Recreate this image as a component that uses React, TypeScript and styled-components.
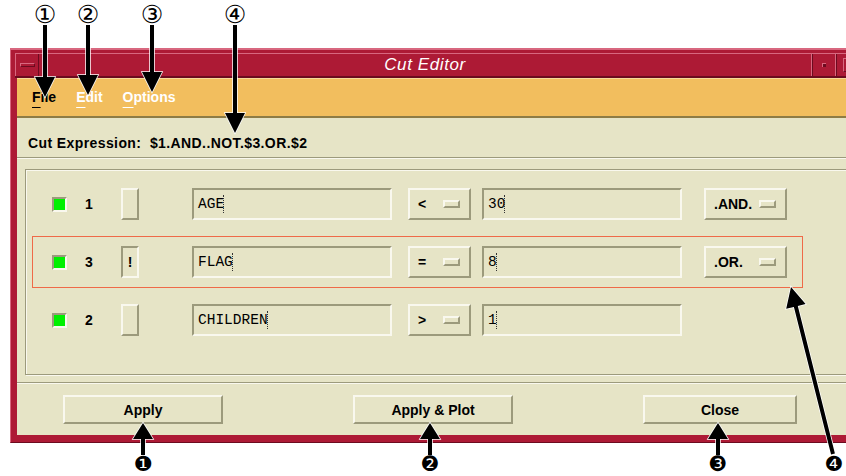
import React from 'react';
import styled, { createGlobalStyle } from 'styled-components';

const red = '#ad1a35';
const redLight = '#d8677f';
const redDark = '#6c0b1f';
const orange = '#f2be5e';
const orangeLight = '#f9d998';
const orangeDark = '#8e7c45';
const beige = '#e6e4c6';
const bevelLight = '#f9f8ee';
const bevelDark = '#9c9a7c';
const green = '#00f000';
const highlight = '#ef6a48';

const GlobalStyle = createGlobalStyle`
  html, body {
    margin: 0;
    padding: 0;
    background: #ffffff;
    overflow: hidden;
  }
  body {
    font-family: 'Liberation Sans', Arial, sans-serif;
  }
`;

type Cut = {
  id: number;
  negated: boolean;
  variable: string;
  op: string;
  value: string;
  join?: string;
  selected?: boolean;
};

const cuts: Cut[] = [
  { id: 1, negated: false, variable: 'AGE', op: '<', value: '30', join: '.AND.' },
  { id: 3, negated: true, variable: 'FLAG', op: '=', value: '8', join: '.OR.', selected: true },
  { id: 2, negated: false, variable: 'CHILDREN', op: '>', value: '1' },
];

const menus = [
  { label: 'File', light: false },
  { label: 'Edit', light: true },
  { label: 'Options', light: true },
];

const buttons = [
  { label: 'Apply', width: 160 },
  { label: 'Apply & Plot', width: 160 },
  { label: 'Close', width: 154 },
];

// arrow as one polygon: shaft + head, tip at (x2, y2)
const arrowPoints = (
  x1: number,
  y1: number,
  x2: number,
  y2: number,
  headLen: number,
  headHalf: number,
  shaftHalf = 2
) => {
  const dx = x2 - x1;
  const dy = y2 - y1;
  const len = Math.sqrt(dx * dx + dy * dy);
  const ux = dx / len;
  const uy = dy / len;
  const px = -uy;
  const py = ux;
  const bx = x2 - ux * headLen;
  const by = y2 - uy * headLen;
  const pts = [
    [x1 + px * shaftHalf, y1 + py * shaftHalf],
    [bx + px * shaftHalf, by + py * shaftHalf],
    [bx + px * headHalf, by + py * headHalf],
    [x2, y2],
    [bx - px * headHalf, by - py * headHalf],
    [bx - px * shaftHalf, by - py * shaftHalf],
    [x1 - px * shaftHalf, y1 - py * shaftHalf],
  ];
  return pts.map((p) => `${p[0].toFixed(1)},${p[1].toFixed(1)}`).join(' ');
};

const topMarks = [
  { label: '①', x: 45, tip: 97 },
  { label: '②', x: 88, tip: 95 },
  { label: '③', x: 152, tip: 92 },
  { label: '④', x: 235, tip: 133 },
];

const bottomMarks = [
  { label: '❶', x: 143 },
  { label: '❷', x: 430 },
  { label: '❸', x: 718 },
];

const Annotations = () => (
  <Overlay width='846' height='476' viewBox='0 0 846 476'>
    {topMarks.map((m) => (
      <g key={m.label}>
        <MarkText x={m.x} y={14}>
          {m.label}
        </MarkText>
        <polygon
          points={arrowPoints(m.x, 25, m.x, m.tip, 20, 10)}
          fill='#000'
          stroke='#fff'
          strokeWidth={1.5}
          paintOrder='stroke'
        />
      </g>
    ))}
    {bottomMarks.map((m) => (
      <g key={m.label}>
        <polygon
          points={arrowPoints(m.x, 455, m.x, 423, 16, 10)}
          fill='#000'
          stroke='#fff'
          strokeWidth={1.5}
          paintOrder='stroke'
        />
        <MarkText x={m.x} y={464} $filled>
          {m.label}
        </MarkText>
      </g>
    ))}
    <polygon
      points={arrowPoints(833, 454, 791, 287, 20, 10)}
      fill='#000'
      stroke='#fff'
      strokeWidth={1.5}
      paintOrder='stroke'
    />
    <MarkText x={834} y={464} $filled>
      ❹
    </MarkText>
  </Overlay>
);

const CutRowView = ({ cut }: { cut: Cut }) => (
  <CutRow $selected={!!cut.selected}>
    <Indicator />
    <RowNumber>{cut.id}</RowNumber>
    <ToggleButton $pressed={cut.negated}>{cut.negated ? '!' : ''}</ToggleButton>
    <TextField $gap={53}>
      {cut.variable}
      <Caret />
    </TextField>
    <OptionMenu $gap={16} $width={63}>
      {cut.op}
      <OptionMark />
    </OptionMenu>
    <TextField $gap={11}>
      {cut.value}
      <Caret />
    </TextField>
    {cut.join && (
      <OptionMenu $gap={22} $width={83}>
        {cut.join}
        <OptionMark />
      </OptionMenu>
    )}
  </CutRow>
);

export default function App() {
  return (
    <Page>
      <GlobalStyle />
      <Window>
        <TitleBar>
          <WindowMenuButton>
            <WindowMenuGlyph />
          </WindowMenuButton>
          <Title>Cut Editor</Title>
          <TitleButton>
            <MinimizeDot />
          </TitleButton>
          <TitleButton>
            <MaximizeBox />
          </TitleButton>
        </TitleBar>
        <Client>
          <MenuBar>
            {menus.map((m) => (
              <MenuItem key={m.label} $light={m.light}>
                <Mnemonic>{m.label[0]}</Mnemonic>
                {m.label.slice(1)}
              </MenuItem>
            ))}
          </MenuBar>
          <ExpressionBar>
            Cut Expression:&nbsp;&nbsp;$1.AND..NOT.$3.OR.$2
          </ExpressionBar>
          <Separator />
          <InnerFrame>
            {cuts.map((c) => (
              <CutRowView key={c.id} cut={c} />
            ))}
          </InnerFrame>
          <Separator $top={7} />
          <ButtonBar>
            {buttons.map((b) => (
              <PushButton key={b.label} type='button' $width={b.width}>
                {b.label}
              </PushButton>
            ))}
          </ButtonBar>
        </Client>
      </Window>
      <Annotations />
    </Page>
  );
}

const Page = styled.div`
  position: relative;
  width: 846px;
  height: 476px;
  overflow: hidden;
  padding: 48px 0 0 10px;
  box-sizing: border-box;
`;

const Window = styled.div`
  width: 842px;
  background: ${red};
  border-top: 2px solid ${redLight};
  border-left: 1px solid ${redLight};
  border-bottom: 1px solid ${redDark};
  padding: 3px 0 7px 6px;
`;

const TitleBar = styled.div`
  display: flex;
  height: 25px;
  box-sizing: border-box;
  border-top: 1px solid ${redLight};
  border-bottom: 2px solid ${redDark};
  margin-left: -2px;
`;

const WindowMenuButton = styled.div`
  width: 22px;
  display: flex;
  align-items: center;
  justify-content: center;
  border-left: 1px solid ${redLight};
  border-right: 1px solid ${redDark};
`;

const WindowMenuGlyph = styled.div`
  width: 13px;
  height: 2px;
  background: ${red};
  border-top: 1px solid ${redLight};
  border-bottom: 1px solid ${redDark};
  border-left: 1px solid ${redLight};
  border-right: 1px solid ${redDark};
`;

const Title = styled.div`
  flex: 1;
  text-align: center;
  color: #ffffff;
  font-style: italic;
  font-size: 17px;
  letter-spacing: 0.6px;
  line-height: 22px;
`;

const TitleButton = styled.div`
  width: 23px;
  display: flex;
  align-items: center;
  justify-content: center;
  border-left: 1px solid ${redLight};
  box-shadow: inset 1px 0 0 ${redDark};
`;

const MinimizeDot = styled.div`
  width: 3px;
  height: 3px;
  background: ${redDark};
  border-top: 1px solid ${redLight};
  border-left: 1px solid ${redLight};
`;

const MaximizeBox = styled.div`
  width: 12px;
  height: 12px;
  border-top: 1px solid ${redLight};
  border-left: 1px solid ${redLight};
  border-bottom: 1px solid ${redDark};
  border-right: 1px solid ${redDark};
  margin-left: 4px;
`;

const Client = styled.div`
  background: ${beige};
  height: 357px;
`;

const MenuBar = styled.div`
  display: flex;
  align-items: center;
  gap: 20px;
  height: 40px;
  box-sizing: border-box;
  padding: 0 0 1px 15px;
  background: ${orange};
  border-top: 1px solid ${orangeLight};
  border-bottom: 2px solid ${orangeDark};
`;

const MenuItem = styled.div<{ $light: boolean }>`
  font-size: 14px;
  font-weight: bold;
  color: ${(p) => (p.$light ? '#ffffff' : '#000000')};
`;

const Mnemonic = styled.span`
  text-decoration: underline;
  text-underline-offset: 5px;
  text-decoration-thickness: 1px;
`;

const ExpressionBar = styled.div`
  height: 39px;
  box-sizing: border-box;
  padding: 17px 0 0 11px;
  font-size: 14px;
  line-height: 16px;
  font-weight: bold;
  letter-spacing: 0.4px;
  color: #000000;
  white-space: nowrap;
`;

const Separator = styled.div<{ $top?: number }>`
  height: 0;
  margin-top: ${(p) => p.$top ?? 0}px;
  border-top: 1px solid ${bevelDark};
  border-bottom: 1px solid ${bevelLight};
`;

const InnerFrame = styled.div`
  margin: 10px 9px 0 8px;
  padding: 8px 0 28px 6px;
  display: flex;
  flex-direction: column;
  gap: 6px;
  border: 1px solid ${bevelDark};
  box-shadow: inset 1px 1px 0 ${bevelLight}, 1px 1px 0 ${bevelLight};
`;

const CutRow = styled.div<{ $selected: boolean }>`
  display: flex;
  align-items: center;
  width: 771px;
  height: 52px;
  box-sizing: border-box;
  border: 1px solid ${(p) => (p.$selected ? highlight : 'transparent')};
`;

const Indicator = styled.div`
  width: 11px;
  height: 11px;
  margin-left: 19px;
  background: ${green};
  border-top: 2px solid ${bevelDark};
  border-left: 2px solid ${bevelDark};
  border-bottom: 2px solid ${bevelLight};
  border-right: 2px solid ${bevelLight};
`;

const RowNumber = styled.div`
  width: 36px;
  margin-left: 18px;
  font-size: 14px;
  font-weight: bold;
  color: #000000;
`;

const ToggleButton = styled.div<{ $pressed: boolean }>`
  width: 18px;
  height: 32px;
  box-sizing: border-box;
  display: flex;
  align-items: center;
  justify-content: center;
  font-size: 14px;
  font-weight: bold;
  border: 2px solid;
  border-color: ${(p) =>
    p.$pressed
      ? `${bevelDark} ${bevelLight} ${bevelLight} ${bevelDark}`
      : `${bevelLight} ${bevelDark} ${bevelDark} ${bevelLight}`};
`;

const TextField = styled.div<{ $gap: number }>`
  width: 200px;
  height: 32px;
  box-sizing: border-box;
  margin-left: ${(p) => p.$gap}px;
  display: flex;
  align-items: center;
  padding: 0 0 0 4px;
  font-family: 'Liberation Mono', 'Courier New', monospace;
  font-size: 14.5px;
  color: #000000;
  border: 2px solid;
  border-color: ${bevelDark} ${bevelLight} ${bevelLight} ${bevelDark};
`;

const Caret = styled.span`
  display: inline-block;
  width: 0;
  height: 18px;
  margin-left: -1px;
  border-left: 1px dotted #333333;
`;

const OptionMenu = styled.div<{ $gap: number; $width: number }>`
  width: ${(p) => p.$width}px;
  height: 32px;
  box-sizing: border-box;
  margin-left: ${(p) => p.$gap}px;
  display: flex;
  align-items: center;
  padding: 0 9px 0 8px;
  font-size: 14px;
  font-weight: bold;
  color: #000000;
  border: 2px solid;
  border-color: ${bevelLight} ${bevelDark} ${bevelDark} ${bevelLight};
`;

const OptionMark = styled.span`
  margin-left: auto;
  width: 13px;
  height: 4px;
  border: 2px solid;
  border-color: ${bevelLight} ${bevelDark} ${bevelDark} ${bevelLight};
`;

const ButtonBar = styled.div`
  display: flex;
  gap: 130px;
  padding: 11px 0 0 46px;
`;

const PushButton = styled.button<{ $width: number }>`
  width: ${(p) => p.$width}px;
  height: 29px;
  padding: 0;
  background: ${beige};
  font-family: 'Liberation Sans', Arial, sans-serif;
  font-size: 14px;
  font-weight: bold;
  color: #000000;
  border: 2px solid;
  border-color: ${bevelLight} ${bevelDark} ${bevelDark} ${bevelLight};
`;

const Overlay = styled.svg`
  position: absolute;
  left: 0;
  top: 0;
  pointer-events: none;
`;

const MarkText = styled.text.attrs({ textAnchor: 'middle', dominantBaseline: 'central' })<{
  $filled?: boolean;
}>`
  font-family: 'DejaVu Sans', sans-serif;
  font-size: ${(p) => (p.$filled ? 21 : 25)}px;
  fill: #000000;
`;
